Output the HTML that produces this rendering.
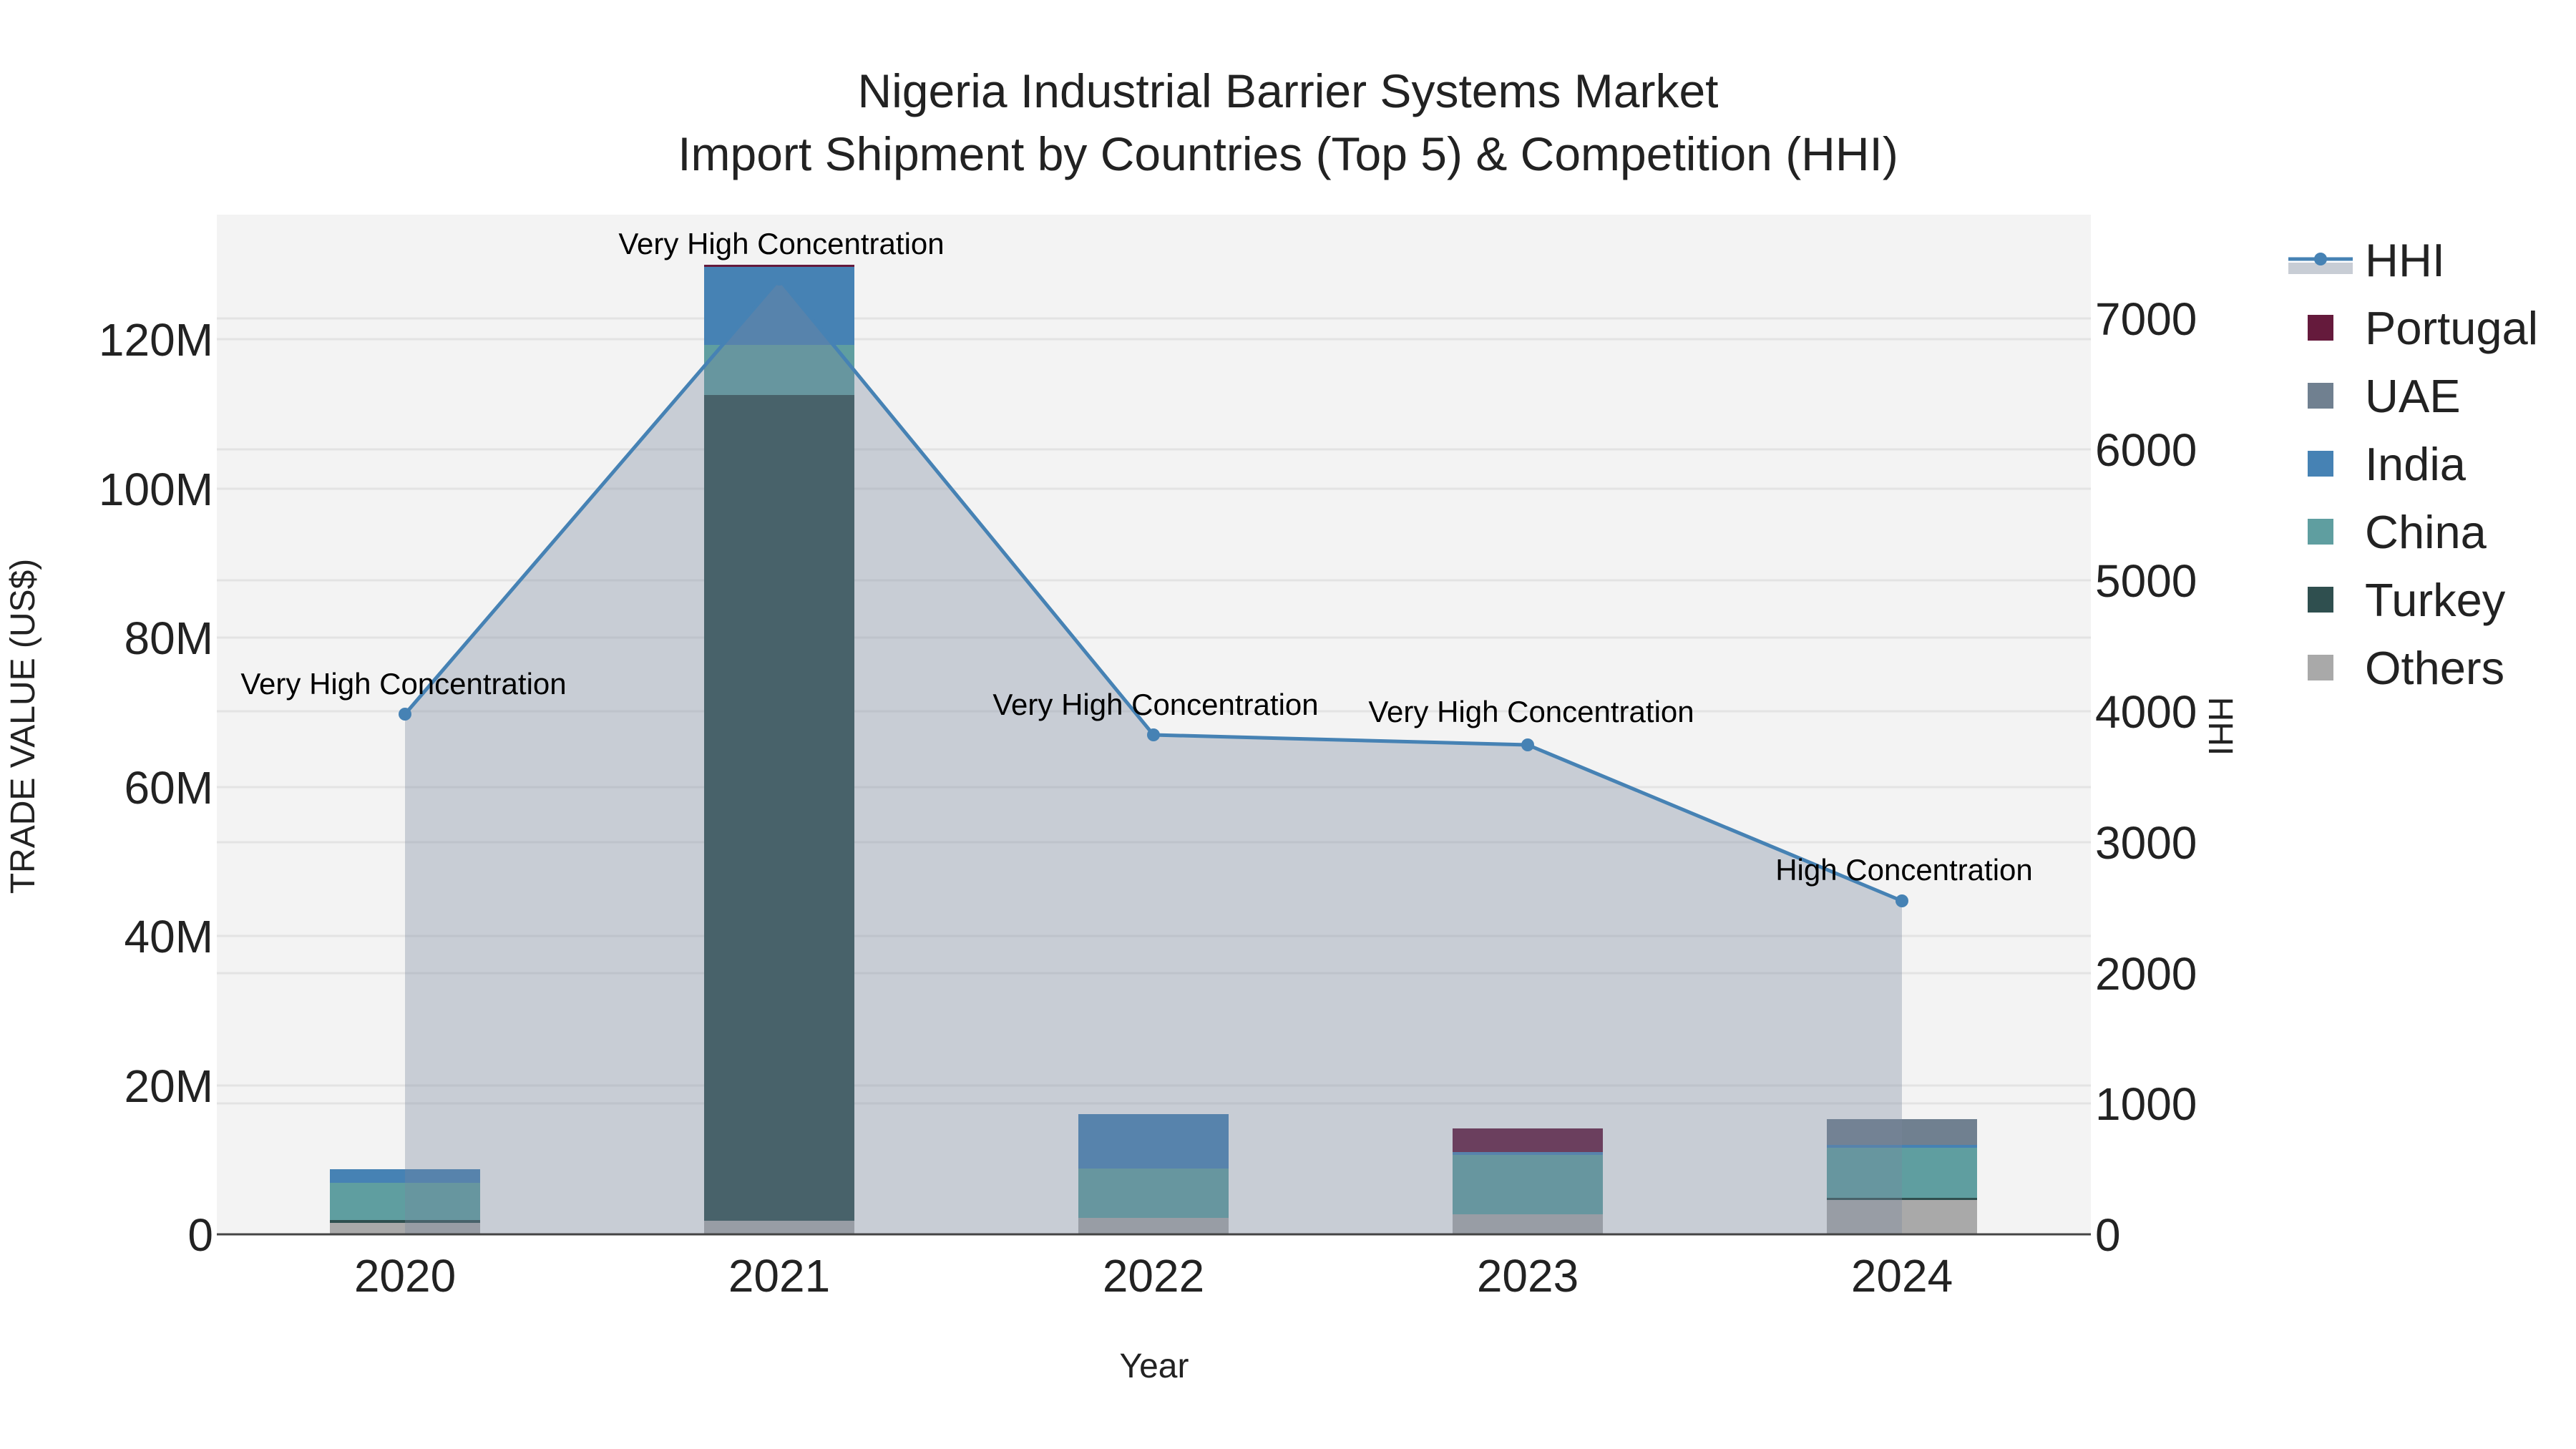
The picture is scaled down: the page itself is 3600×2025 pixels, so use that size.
<!DOCTYPE html>
<html><head><meta charset="utf-8"><style>
html,body{margin:0;padding:0;background:#fff;}
svg{display:block;font-family:"Liberation Sans",Arial,sans-serif;}
</style></head><body>
<svg width="3600" height="2025" viewBox="0 0 3600 2025" xmlns="http://www.w3.org/2000/svg">
<rect width="3600" height="2025" fill="#fff"/>
<rect x="303" y="300" width="2619" height="1425" fill="#f3f3f3"/>
<g stroke="#e3e3e3" stroke-width="3">
<line x1="303" x2="2922" y1="474" y2="474"/><line x1="303" x2="2922" y1="683" y2="683"/><line x1="303" x2="2922" y1="891" y2="891"/><line x1="303" x2="2922" y1="1100" y2="1100"/><line x1="303" x2="2922" y1="1308" y2="1308"/><line x1="303" x2="2922" y1="1517" y2="1517"/>
<line x1="303" x2="2922" y1="445" y2="445"/><line x1="303" x2="2922" y1="628" y2="628"/><line x1="303" x2="2922" y1="811" y2="811"/><line x1="303" x2="2922" y1="994" y2="994"/><line x1="303" x2="2922" y1="1177" y2="1177"/><line x1="303" x2="2922" y1="1360" y2="1360"/><line x1="303" x2="2922" y1="1542" y2="1542"/>
</g>
<g>
<rect x="461" y="1709" width="210" height="16" fill="#a9a9a9"/>
<rect x="461" y="1705" width="210" height="4" fill="#2f4f4f"/>
<rect x="461" y="1653" width="210" height="52" fill="#5f9ea0"/>
<rect x="461" y="1634" width="210" height="19" fill="#4682b4"/>

<rect x="984" y="1706" width="210" height="19" fill="#a9a9a9"/>
<rect x="984" y="552" width="210" height="1154" fill="#2f4f4f"/>
<rect x="984" y="482" width="210" height="70" fill="#5f9ea0"/>
<rect x="984" y="373" width="210" height="109" fill="#4682b4"/>
<rect x="984" y="370" width="210" height="3" fill="#651a3c"/>

<rect x="1507" y="1702" width="210" height="23" fill="#a9a9a9"/>
<rect x="1507" y="1633" width="210" height="69" fill="#5f9ea0"/>
<rect x="1507" y="1557" width="210" height="76" fill="#4682b4"/>

<rect x="2030" y="1697" width="210" height="28" fill="#a9a9a9"/>
<rect x="2030" y="1614" width="210" height="83" fill="#5f9ea0"/>
<rect x="2030" y="1610" width="210" height="4" fill="#4682b4"/>
<rect x="2030" y="1577" width="210" height="33" fill="#651a3c"/>

<rect x="2553" y="1677" width="210" height="48" fill="#a9a9a9"/>
<rect x="2553" y="1674" width="210" height="3" fill="#2f4f4f"/>
<rect x="2553" y="1604" width="210" height="70" fill="#5f9ea0"/>
<rect x="2553" y="1600" width="210" height="4" fill="#4682b4"/>
<rect x="2553" y="1564" width="210" height="36" fill="#708090"/>
</g>
<polygon points="566,998 1089,390 1612,1027 2135,1041 2658,1259 2658,1725 566,1725" fill="rgb(120,134,157)" fill-opacity="0.35"/>
<line x1="303" x2="2922" y1="1725" y2="1725" stroke="#444" stroke-width="3"/>
<polyline points="566,998 1089,390 1612,1027 2135,1041 2658,1259" fill="none" stroke="#4682b4" stroke-width="5"/>
<g fill="#4682b4"><circle cx="566" cy="998" r="9"/><circle cx="1089" cy="390" r="9"/><circle cx="1612" cy="1027" r="9"/><circle cx="2135" cy="1041" r="9"/><circle cx="2658" cy="1259" r="9"/></g>
<g font-size="42" fill="#000" text-anchor="middle">
<text x="564" y="970">Very High Concentration</text>
<text x="1092" y="355">Very High Concentration</text>
<text x="1615" y="999">Very High Concentration</text>
<text x="2140" y="1009">Very High Concentration</text>
<text x="2661" y="1230">High Concentration</text>
</g>
<g font-size="66" fill="#222" text-anchor="middle">
<text x="1800" y="150">Nigeria Industrial Barrier Systems Market</text>
<text x="1800" y="238">Import Shipment by Countries (Top 5) &amp; Competition (HHI)</text>
</g>
<g font-size="64" fill="#222" text-anchor="end">
<text x="298" y="497">120M</text><text x="298" y="706">100M</text><text x="298" y="914">80M</text><text x="298" y="1123">60M</text><text x="298" y="1331">40M</text><text x="298" y="1540">20M</text><text x="298" y="1748">0</text>
</g>
<g font-size="64" fill="#222">
<text x="2928" y="468">7000</text><text x="2928" y="651">6000</text><text x="2928" y="834">5000</text><text x="2928" y="1017">4000</text><text x="2928" y="1200">3000</text><text x="2928" y="1383">2000</text><text x="2928" y="1565">1000</text><text x="2928" y="1748">0</text>
</g>
<g font-size="64" fill="#222" text-anchor="middle">
<text x="566" y="1805">2020</text><text x="1089" y="1805">2021</text><text x="1612" y="1805">2022</text><text x="2135" y="1805">2023</text><text x="2658" y="1805">2024</text>
</g>
<text x="1613" y="1925" font-size="48" fill="#222" text-anchor="middle">Year</text>
<text transform="translate(48,1015) rotate(-90)" font-size="48" fill="#222" text-anchor="middle">TRADE VALUE (US$)</text>
<text transform="translate(3087,1015) rotate(90)" font-size="48" fill="#222" text-anchor="middle">HHI</text>
<rect x="3198" y="367" width="90" height="16" fill="#c8cdd5"/>
<line x1="3198" x2="3288" y1="362" y2="362" stroke="#4682b4" stroke-width="5"/>
<circle cx="3243" cy="362" r="9" fill="#4682b4"/>
<rect x="3225" y="440" width="36" height="36" fill="#651a3c"/>
<rect x="3225" y="535" width="36" height="36" fill="#708090"/>
<rect x="3225" y="630" width="36" height="36" fill="#4682b4"/>
<rect x="3225" y="725" width="36" height="36" fill="#5f9ea0"/>
<rect x="3225" y="820" width="36" height="36" fill="#2f4f4f"/>
<rect x="3225" y="915" width="36" height="36" fill="#a9a9a9"/>
<g font-size="65" fill="#222">
<text x="3305" y="386">HHI</text>
<text x="3305" y="481">Portugal</text>
<text x="3305" y="576">UAE</text>
<text x="3305" y="671">India</text>
<text x="3305" y="766">China</text>
<text x="3305" y="861">Turkey</text>
<text x="3305" y="956">Others</text>
</g>
</svg>
</body></html>
